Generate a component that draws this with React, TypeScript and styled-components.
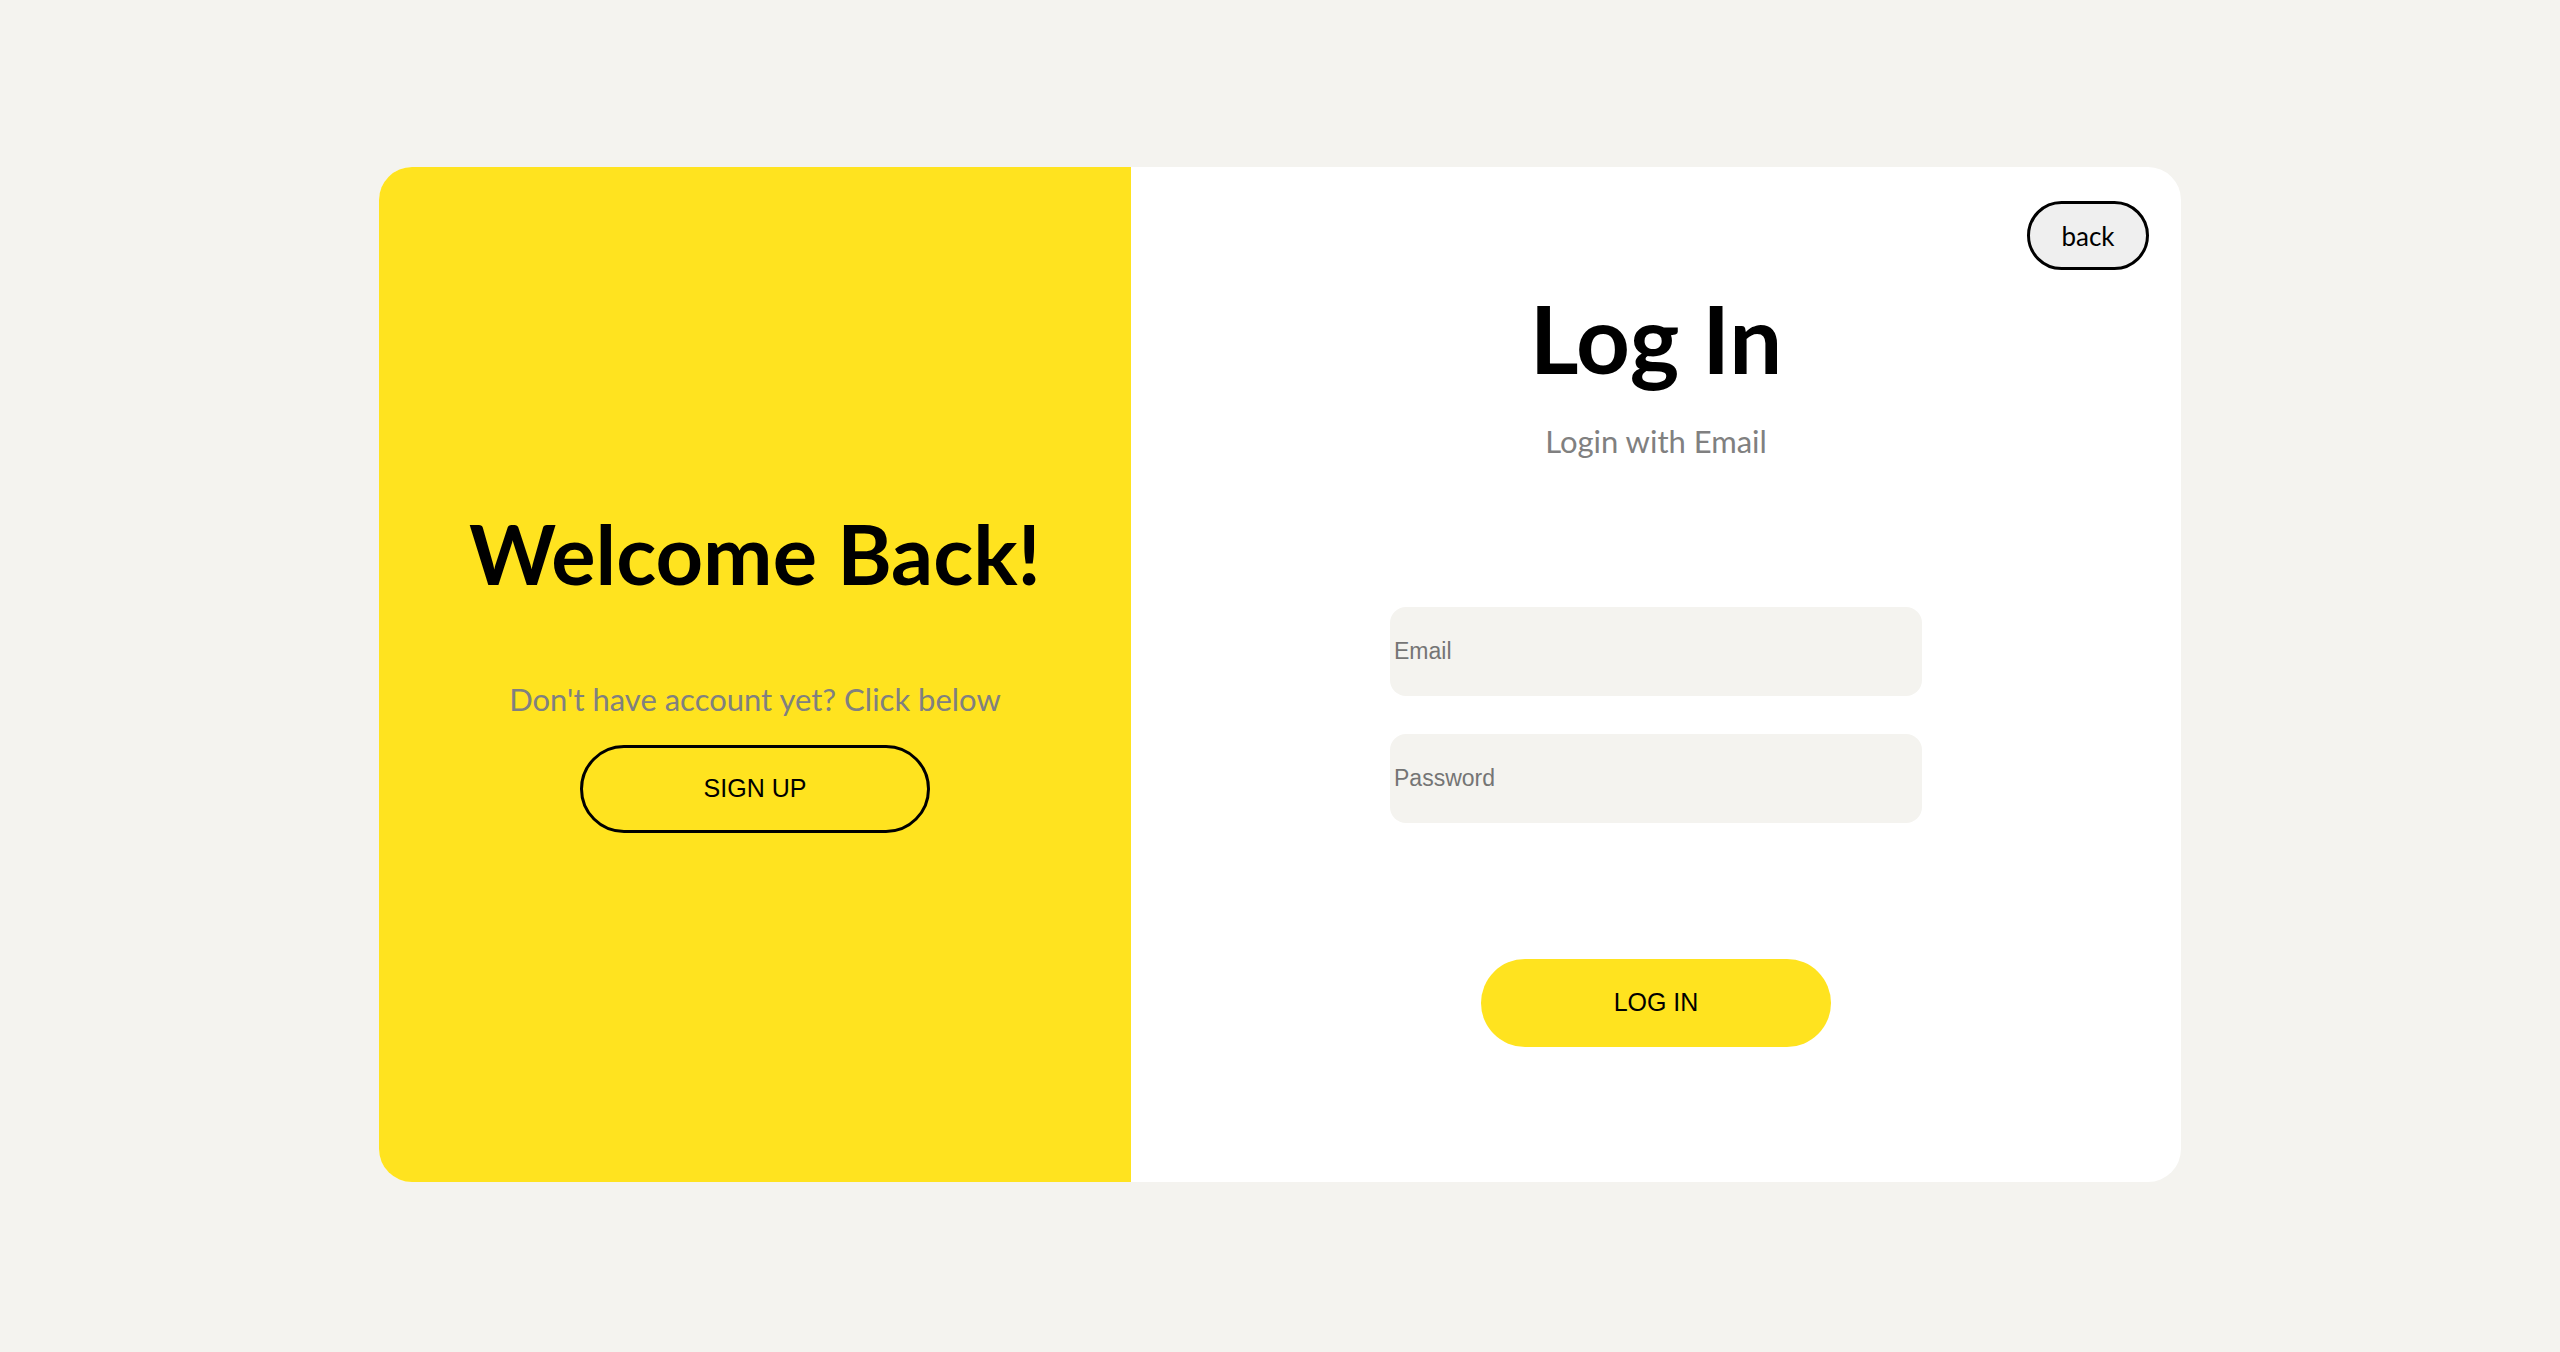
import React from "react";
import styled, { createGlobalStyle } from "styled-components";

const GlobalStyle = createGlobalStyle`
  html, body {
    margin: 0;
    padding: 0;
    background: #f4f3ef;
  }
  * { box-sizing: border-box; }
`;

const Page = styled.main`
  height: 100vh;
  display: flex;
  align-items: center;
  justify-content: center;
  padding-bottom: 3px;
  font-family: Lato, "Noto Sans", sans-serif;
`;

const Card = styled.section`
  width: 1802px;
  height: 1015px;
  border-radius: 33px;
  overflow: hidden;
  background: #ffffff;
  display: grid;
  grid-template-columns: 752px 1fr;
`;

const WelcomePanel = styled.div`
  background: #ffe31f;
  display: flex;
  flex-direction: column;
  align-items: center;
  padding-top: 337px;
`;

const LoginPanel = styled.div`
  display: flex;
  flex-direction: column;
  align-items: center;
`;

const TopBar = styled.div`
  align-self: stretch;
  display: flex;
  justify-content: flex-end;
  padding: 34px 32px 0 0;
`;

const BackButton = styled.button`
  width: 122px;
  height: 69px;
  border-radius: 35px;
  border: 3px solid #000;
  background: #efefef;
  color: #000;
  font-family: Lato, "Noto Sans", sans-serif;
  font-size: 26px;
  padding: 0;
  cursor: pointer;
`;

const Heading = styled.h1<{ $size: number; $mt: number }>`
  margin: ${(p) => p.$mt}px 0 0;
  font-family: Lato, "Noto Sans", sans-serif;
  font-weight: 700;
  font-size: ${(p) => p.$size}px;
  line-height: 1.2;
  color: #000;
`;

const Subtitle = styled.p<{ $size: number; $mt: number }>`
  margin: ${(p) => p.$mt}px 0 0;
  font-family: Lato, "Noto Sans", sans-serif;
  font-size: ${(p) => p.$size}px;
  line-height: 1.2;
  color: #808080;
`;

const PillButton = styled.button<{ $outlined?: boolean; $mt: number }>`
  margin-top: ${(p) => p.$mt}px;
  width: 350px;
  height: 88px;
  border-radius: 44px;
  border: ${(p) => (p.$outlined ? "3px solid #000" : "none")};
  background: #ffe31f;
  color: #000;
  font-family: "Liberation Sans", Arial, sans-serif;
  font-size: 25px;
  cursor: pointer;
`;

const Form = styled.form`
  margin-top: 147px;
  display: flex;
  flex-direction: column;
  align-items: center;
  gap: 38px;
`;

const Field = styled.input`
  width: 532px;
  height: 89px;
  border: none;
  border-radius: 16px;
  background: #f4f3ef;
  padding: 0 4px;
  font-family: "Liberation Sans", Arial, sans-serif;
  font-size: 23px;
  color: #333;
  outline: none;
  &::placeholder {
    color: #757575;
  }
`;

export default function App() {
  return (
    <>
      <GlobalStyle />
      <Page>
        <Card>
          <WelcomePanel>
            <Heading $size={83} $mt={0}>Welcome Back!</Heading>
            <Subtitle $size={31} $mt={77}>Don't have account yet? Click below</Subtitle>
            <PillButton $outlined $mt={27} type="button">SIGN UP</PillButton>
          </WelcomePanel>
          <LoginPanel>
            <TopBar>
              <BackButton type="button">back</BackButton>
            </TopBar>
            <Heading $size={94} $mt={12}>Log In</Heading>
            <Subtitle $size={31} $mt={28}>Login with Email</Subtitle>
            <Form onSubmit={(e) => e.preventDefault()}>
              <Field type="email" placeholder="Email" />
              <Field type="password" placeholder="Password" />
              <PillButton $mt={98} type="submit">LOG IN</PillButton>
            </Form>
          </LoginPanel>
        </Card>
      </Page>
    </>
  );
}
